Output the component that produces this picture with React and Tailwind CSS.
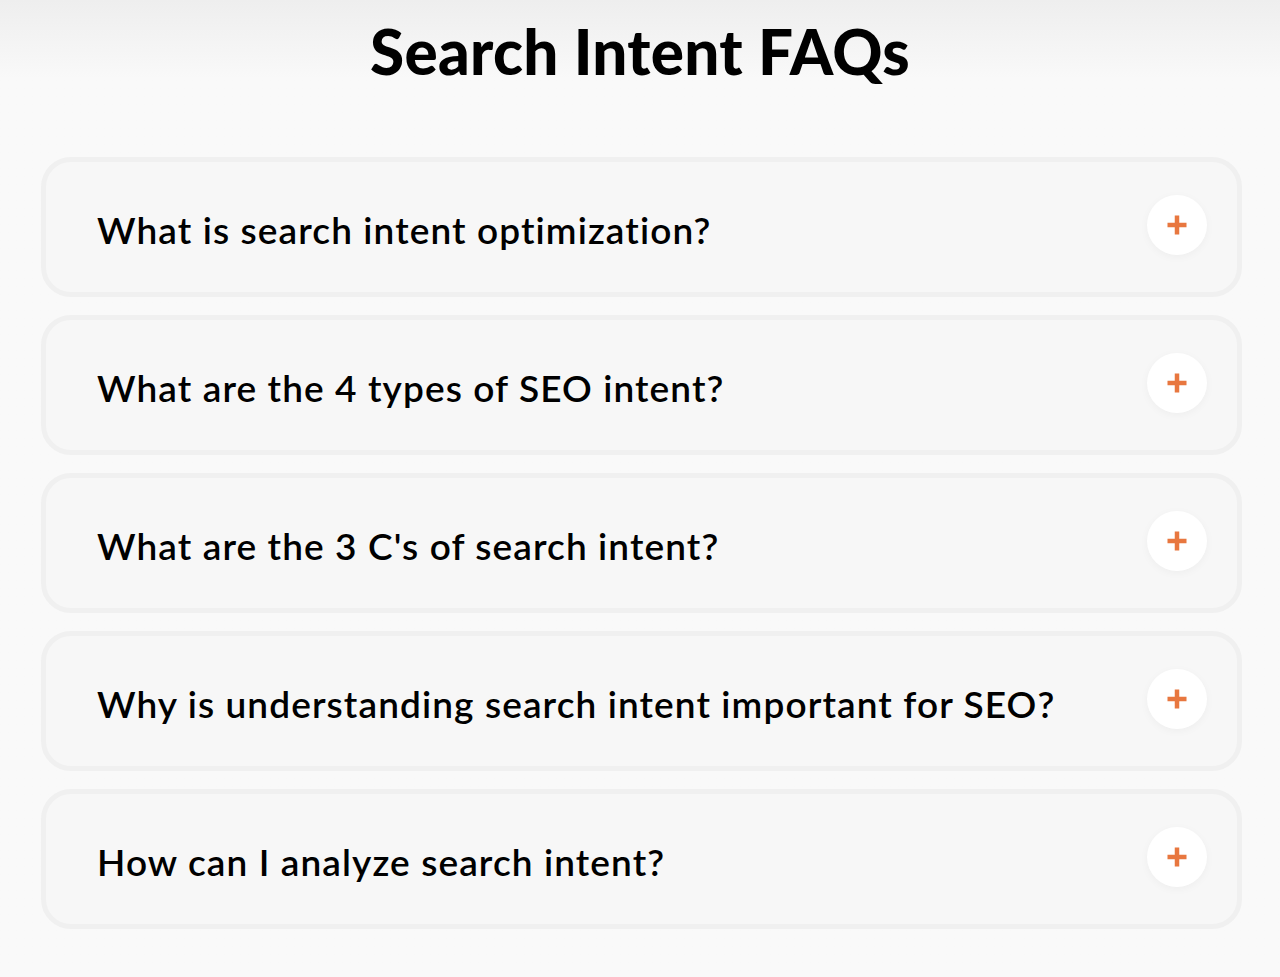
import React from "react"

const questions = [
    "What is search intent optimization?",
    "What are the 4 types of SEO intent?",
    "What are the 3 C's of search intent?",
    "Why is understanding search intent important for SEO?",
    "How can I analyze search intent?",
]

const PlusIcon = () => (
    <svg width="22" height="22" viewBox="0 0 22 22" fill="none">
        <path d="M11 1.5v19M1.5 11h19" stroke="#e8773f" strokeWidth="4.5" />
    </svg>
)

const FaqItem = ({ text }) => (
    <div className="h-[140px] rounded-[30px] border-[5px] border-[#f0f0f0] bg-[#f7f7f7] flex items-center justify-between pl-[51px] pr-[30px]">
        <span className="text-[37px] font-semibold text-black tracking-[1.1px] pt-[6px]">{text}</span>
        <button className="w-[60px] h-[60px] rounded-full bg-white shadow-[0_2px_8px_rgba(0,0,0,0.04)] flex items-center justify-center -mt-[4px]">
            <PlusIcon />
        </button>
    </div>
)

const App = () => {
    return (
        <div className="min-h-[977px] w-full bg-gradient-to-b from-[#eeeeee] via-[#f9f9f9] via-[8%] to-[#f9f9f9] font-['Lato',sans-serif]">
            <h1 className="text-center text-[62px] font-black text-black pt-[5px] h-[157px] tracking-[0.3px]">Search Intent FAQs</h1>
            <div className="px-[41px] pr-[38px] flex flex-col gap-[18px]">
                {questions.map(q => <FaqItem key={q} text={q} />)}
            </div>
        </div>
    )
}

export default App
